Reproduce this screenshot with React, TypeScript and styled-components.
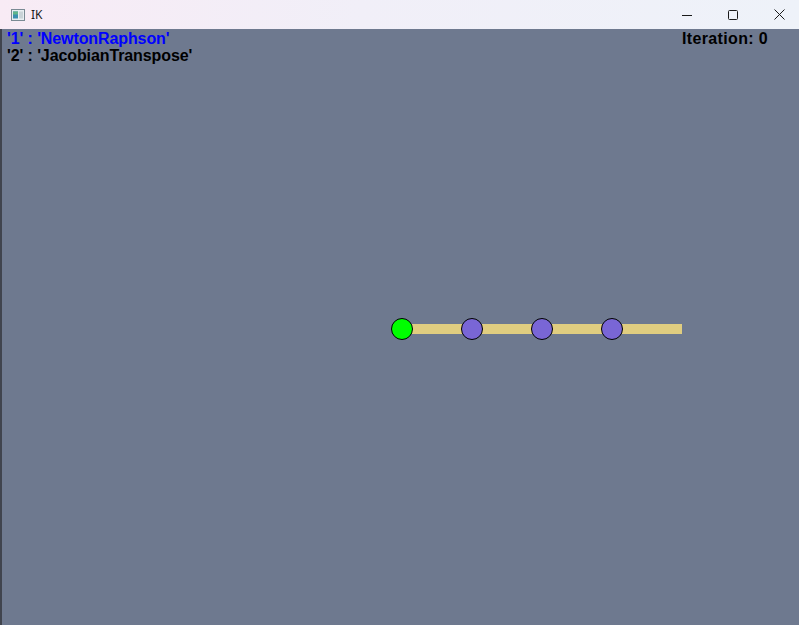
import React from "react";
import styled, { createGlobalStyle } from "styled-components";

const Global = createGlobalStyle`
  html, body { margin: 0; padding: 0; width: 799px; height: 625px; overflow: hidden; }
  #root { width: 799px; height: 625px; }
`;

const Window = styled.div`
  width: 799px;
  height: 625px;
  display: flex;
  flex-direction: column;
  background: #6e798f;
`;

const TitleBar = styled.div`
  height: 29px;
  flex: none;
  display: flex;
  align-items: center;
  background: linear-gradient(90deg, #f8ebf5 0%, #f1eff8 45%, #eef2f9 100%);
  font-family: "Noto Sans", "Liberation Sans", sans-serif;
  font-size: 12px;
  color: #1a1a1a;
`;

const AppIcon = styled.svg`
  margin-left: 11px;
  margin-right: 6px;
  flex: none;
`;

const Title = styled.span`
  flex: 1;
  line-height: 1;
`;

const Controls = styled.div`
  display: flex;
  height: 100%;
`;

const CtrlButton = styled.div`
  box-sizing: border-box;
  width: 46px;
  height: 100%;
  padding-left: 6px;
  display: flex;
  align-items: center;
  justify-content: center;
`;

const Canvas = styled.div`
  position: relative;
  flex: 1;
  border-left: 2px solid #40444e;
`;

const Overlay = styled.div`
  position: absolute;
  inset: 0;
  display: flex;
  justify-content: space-between;
  padding: 1px 31px 0 5px;
  font-family: "Liberation Sans", Arial, sans-serif;
  font-weight: bold;
  font-size: 16px;
  line-height: 17px;
  letter-spacing: -0.1px;
  pointer-events: none;
`;

const Menu = styled.div`
  display: flex;
  flex-direction: column;
`;

const MenuItem = styled.div<{ $active?: boolean }>`
  color: ${(p) => (p.$active ? "#0000ff" : "#000000")};
  white-space: pre;
`;

const Iter = styled.div`
  color: #000;
  letter-spacing: 0.35px;
`;

const Scene = styled.svg`
  display: block;
`;

export default function App() {
  const joints = [402, 472, 542, 612];
  return (
    <>
      <Global />
      <Window>
        <TitleBar>
          <AppIcon width="14" height="12" viewBox="0 0 14 12">
            <rect x="0.5" y="0.5" width="13" height="11" fill="#e8eef2" stroke="#7a8a94" />
            <rect x="2" y="2.5" width="5" height="7" fill="#3a8fb0" />
            <rect x="2" y="2.5" width="5" height="3" fill="#5fb58a" />
            <rect x="8" y="2.5" width="4" height="7" fill="#c9d3d8" />
          </AppIcon>
          <Title>IK</Title>
          <Controls>
            <CtrlButton>
              <svg width="10" height="10" viewBox="0 0 10 10">
                <line x1="0" y1="5.5" x2="10" y2="5.5" stroke="#1a1a1a" strokeWidth="1" />
              </svg>
            </CtrlButton>
            <CtrlButton>
              <svg width="10" height="10" viewBox="0 0 10 10">
                <rect x="0.5" y="0.5" width="9" height="9" rx="1" fill="none" stroke="#1a1a1a" strokeWidth="1" />
              </svg>
            </CtrlButton>
            <CtrlButton>
              <svg width="11" height="11" viewBox="0 0 11 11">
                <path d="M0.5 0.5 L10.5 10.5 M10.5 0.5 L0.5 10.5" stroke="#1a1a1a" strokeWidth="1" />
              </svg>
            </CtrlButton>
          </Controls>
        </TitleBar>
        <Canvas>
          <Scene width="797" height="596" viewBox="2 29 797 596">
            <rect x="402" y="324" width="280" height="10" fill="#e0cd80" />
            {joints.map((x, i) => (
              <circle
                key={x}
                cx={x}
                cy={329}
                r={10.5}
                fill={i === 0 ? "#00ff00" : "#7966d6"}
                stroke="#000"
                strokeWidth="1"
              />
            ))}
          </Scene>
          <Overlay>
            <Menu>
              <MenuItem $active>{"'1' : 'NewtonRaphson'"}</MenuItem>
              <MenuItem>{"'2' : 'JacobianTranspose'"}</MenuItem>
            </Menu>
            <Iter>Iteration: 0</Iter>
          </Overlay>
        </Canvas>
      </Window>
    </>
  );
}
